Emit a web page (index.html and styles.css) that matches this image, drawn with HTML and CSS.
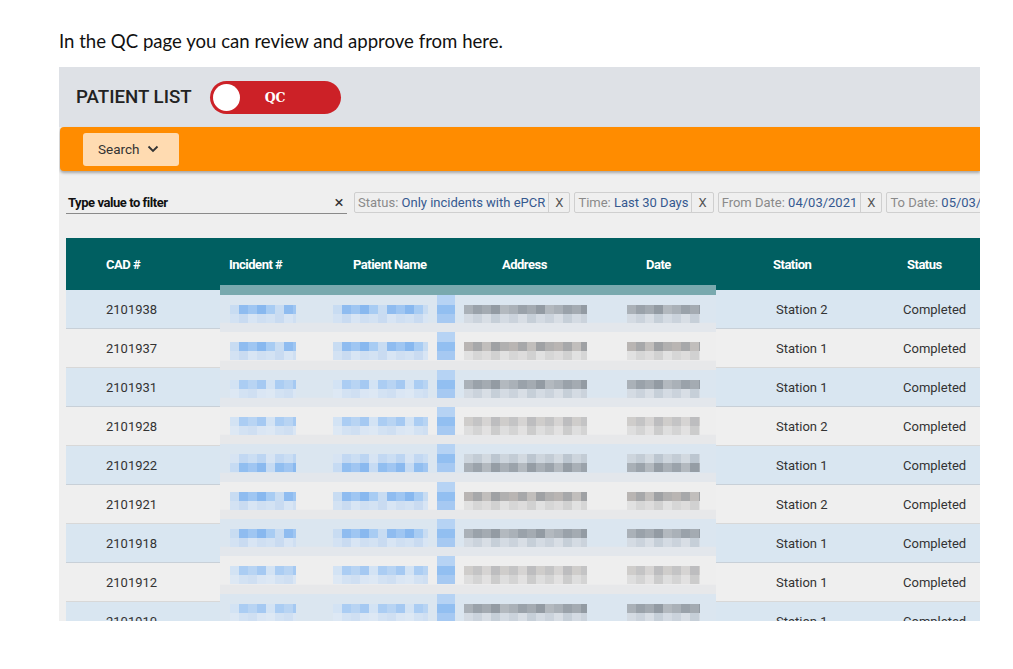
FILE: index.html
```html
<!DOCTYPE html>
<html lang="en">
<head>
  <meta charset="UTF-8">
  <title>QC page</title>
  <link rel="stylesheet" href="styles.css">
</head>
<body>
  <p class="intro">In the QC page you can review and approve from here.</p>

  <div class="shot">
    <div class="topbar">
      <h1>PATIENT LIST</h1>
      <div class="toggle"><span class="knob"></span><span class="toggle-label">QC</span></div>
    </div>

    <div class="orange">
      <button class="search">Search
        <svg width="12" height="8" viewBox="0 0 12 8"><path d="M1.5 1.5 L6 6 L10.5 1.5" fill="none" stroke="#333" stroke-width="1.8"/></svg>
      </button>
    </div>

    <div class="filters">
      <div class="filter-input">
        <span>Type value to filter</span>
        <span class="clear">&times;</span>
      </div>
      <div class="chip"><span class="chip-text">Status: <b>Only incidents with ePCR</b></span><span class="chip-x">X</span></div>
      <div class="chip"><span class="chip-text">Time: <b>Last 30 Days</b></span><span class="chip-x">X</span></div>
      <div class="chip"><span class="chip-text">From Date: <b>04/03/2021</b></span><span class="chip-x">X</span></div>
      <div class="chip"><span class="chip-text">To Date: <b>05/03/2021</b></span><span class="chip-x">X</span></div>
    </div>

    <div class="table">
      <div class="row head">
        <div class="c1">CAD #</div>
        <div>Incident #</div>
        <div>Patient Name</div>
        <div>Address</div>
        <div>Date</div>
        <div class="c6">Station</div>
        <div class="c7">Status</div>
      </div>
      <div class="row blue"><div class="c1">2101938</div><div></div><div></div><div></div><div></div><div class="c6">Station 2</div><div>Completed</div></div>
      <div class="row grey"><div class="c1">2101937</div><div></div><div></div><div></div><div></div><div class="c6">Station 1</div><div>Completed</div></div>
      <div class="row blue"><div class="c1">2101931</div><div></div><div></div><div></div><div></div><div class="c6">Station 1</div><div>Completed</div></div>
      <div class="row grey"><div class="c1">2101928</div><div></div><div></div><div></div><div></div><div class="c6">Station 2</div><div>Completed</div></div>
      <div class="row blue"><div class="c1">2101922</div><div></div><div></div><div></div><div></div><div class="c6">Station 1</div><div>Completed</div></div>
      <div class="row grey"><div class="c1">2101921</div><div></div><div></div><div></div><div></div><div class="c6">Station 2</div><div>Completed</div></div>
      <div class="row blue"><div class="c1">2101918</div><div></div><div></div><div></div><div></div><div class="c6">Station 1</div><div>Completed</div></div>
      <div class="row grey"><div class="c1">2101912</div><div></div><div></div><div></div><div></div><div class="c6">Station 1</div><div>Completed</div></div>
      <div class="row blue"><div class="c1">2101910</div><div></div><div></div><div></div><div></div><div class="c6">Station 1</div><div>Completed</div></div>
    </div>

    <!-- blurred patch pasted over the private columns -->
    <div class="redact">
      <div class="redact-bar"></div>
      <div class="rrow blue"><i class="b inc dk"></i><i class="b pat dk"></i><i class="b strip"></i><i class="b adr gd"></i><i class="b dat gd"></i></div>
      <div class="rrow grey"><i class="b inc dk"></i><i class="b pat dk"></i><i class="b strip"></i><i class="b adr gg"></i><i class="b dat gg"></i></div>
      <div class="rrow blue"><i class="b inc lt"></i><i class="b pat lt"></i><i class="b strip"></i><i class="b adr gd"></i><i class="b dat gd"></i></div>
      <div class="rrow grey"><i class="b inc lt"></i><i class="b pat lt"></i><i class="b strip"></i><i class="b adr gl"></i><i class="b dat gl"></i></div>
      <div class="rrow blue"><i class="b inc up"></i><i class="b pat up"></i><i class="b strip"></i><i class="b adr gu"></i><i class="b dat gu"></i></div>
      <div class="rrow grey"><i class="b inc dk"></i><i class="b pat dk"></i><i class="b strip"></i><i class="b adr gg"></i><i class="b dat gg"></i></div>
      <div class="rrow blue"><i class="b inc dk"></i><i class="b pat dk"></i><i class="b strip"></i><i class="b adr gd"></i><i class="b dat gd"></i></div>
      <div class="rrow grey"><i class="b inc lt"></i><i class="b pat lt"></i><i class="b strip"></i><i class="b adr gl"></i><i class="b dat gl"></i></div>
      <div class="rrow blue"><i class="b inc lt"></i><i class="b pat lt"></i><i class="b strip"></i><i class="b adr gd"></i><i class="b dat gd"></i></div>
    </div>
  </div>
</body>
</html>
```

FILE: styles.css
```css
body {
  margin: 0;
  background: #fff;
  font-family: Roboto, "Liberation Sans", sans-serif;
}
.intro {
  margin: 0;
  padding: 31px 0 0 59px;
  font-family: Lato, "Liberation Sans", sans-serif;
  font-size: 18.6px;
  line-height: 20px;
  color: #111;
}
.shot {
  position: relative;
  width: 921px;
  height: 554px;
  margin: 16px 0 0 59px;
  background: #efefef;
  overflow: hidden;
}
.topbar {
  height: 60px;
  background: #dee1e6;
  display: flex;
  align-items: center;
  padding-left: 17px;
}
.topbar h1 {
  margin: 0;
  font-size: 18.7px;
  font-weight: 500;
  color: #222;
}
.toggle {
  margin-left: 18px;
  width: 131px;
  height: 33px;
  border-radius: 17px;
  background: #cc2127;
  display: flex;
  align-items: center;
  position: relative;
}
.knob {
  position: absolute;
  left: 3px;
  top: 3px;
  width: 27px;
  height: 27px;
  border-radius: 50%;
  background: #fff;
}
.toggle-label {
  margin-left: 55px;
  color: #fff;
  font-family: "DejaVu Serif", serif;
  font-weight: bold;
  font-size: 12.5px;
}
.orange {
  margin-left: 1px;
  height: 44px;
  background: #ff8c00;
  border-radius: 4px 0 0 4px;
  box-shadow: 0 2px 3px rgba(0,0,0,0.3);
  display: flex;
  align-items: center;
  padding-left: 23px;
}
.search {
  width: 96px;
  height: 33px;
  border: none;
  border-radius: 3px;
  background: #ffdbb1;
  font-family: Roboto, sans-serif;
  font-size: 13.5px;
  color: #333;
  display: flex;
  align-items: center;
  padding: 0 0 0 15px;
  gap: 8px;
}
.filters {
  display: flex;
  align-items: center;
  padding: 20px 0 0 7px;
  height: 23px;
}
.filter-input {
  flex-shrink: 0;
  width: 281px;
  height: 22px;
  border-bottom: 1px solid #8a8a8a;
  display: flex;
  align-items: center;
  justify-content: space-between;
  font-size: 13px;
  font-weight: bold;
  letter-spacing: -0.45px;
  color: #111;
  padding-left: 2px;
  box-sizing: border-box;
  margin-right: 7px;
}
.clear {
  font-weight: normal;
  font-size: 17px;
  color: #333;
  margin-right: 4px;
}
.chip {
  display: flex;
  height: 19px;
  border: 1px solid #cfcfcf;
  border-radius: 2px;
  margin-right: 4px;
  font-size: 13px;
  color: #8a8a8a;
  flex-shrink: 0;
  white-space: nowrap;
}
.chip-text {
  padding: 0 3px;
  line-height: 19px;
}
.chip-text b {
  font-weight: normal;
  color: #35598f;
}
.chip-x {
  border-left: 1px solid #cfcfcf;
  padding: 0 6px;
  line-height: 19px;
  color: #555;
}
.table {
  margin: 24px 0 0 7px;
  width: 914px;
}
.row {
  display: grid;
  grid-template-columns: 163px 124px 149px 144px 126px 131px 77px;
  align-items: center;
  height: 39px;
  font-size: 13px;
  color: #333;
  border-bottom: 1px solid #c8d0d8;
  box-sizing: border-box;
  white-space: nowrap;
}
.row .c1 {
  padding-left: 40px;
}
.row .c6 {
  padding-left: 4px;
}
.row.head {
  height: 52px;
  background: #005f61;
  color: #fff;
  font-weight: bold;
  letter-spacing: -0.5px;
  border: none;
}
.row.head .c6 {
  padding-left: 1px;
}
.row.head .c7 {
  padding-left: 4px;
}
.row.blue {
  background: #d9e6f1;
}
.row.grey {
  background: #efefef;
  border-bottom-color: #d8d8d8;
}

/* blurred patch */
.redact {
  position: absolute;
  left: 161px;
  top: 218px;
  width: 496px;
}
.redact-bar {
  height: 10px;
  background: #79a9ae;
}
.rrow {
  position: relative;
  height: 37.33px;
  box-shadow: inset 0 -9.33px 0 #e3e7ec;
}
.rrow.blue {
  background: #dbe6f0;
}
.rrow.grey {
  background: #eeeeee;
  box-shadow: inset 0 -9.33px 0 #e7e8ea;
}
.b {
  position: absolute;
  top: 10px;
  height: 18px;
  background-repeat: repeat-x;
  background-size: 100% 9px;
  background-position: 0 0, 0 9px;
}
.inc { left: 10px; width: 66px; }
.pat { left: 113px; width: 95px; }
.adr { left: 244px; width: 123px; }
.dat { left: 407px; width: 73px; }
.b.strip {
  left: 217px;
  width: 18px;
  top: 0;
  height: 28px;
  background: linear-gradient(180deg, #b6d3f4 0 10px, #92bff1 10px 19px, #a6c9f2 19px 28px);
}
.b.dk {
  background-image:
    repeating-linear-gradient(90deg, #c8dcf2 0 9px, #8fbcf0 9px 18px, #9fc6f2 18px 27px, #88b8ef 27px 36px, #a8ccf3 36px 45px),
    repeating-linear-gradient(90deg, #d3e2f3 0 9px, #c9dbf1 9px 18px, #d8e5f4 18px 27px, #cfdff2 27px 36px);
}
.b.lt {
  background-image:
    repeating-linear-gradient(90deg, #d3e3f4 0 9px, #abcdf3 9px 18px, #b8d4f3 18px 27px, #a5c9f2 27px 36px),
    repeating-linear-gradient(90deg, #dde8f4 0 9px, #d3e2f3 9px 18px, #cfdff2 18px 27px, #dae6f4 27px 36px);
}
.b.up {
  background-image:
    repeating-linear-gradient(90deg, #d7e4f3 0 9px, #c2d8f2 9px 18px, #cbdef3 18px 27px, #bcd5f2 27px 36px),
    repeating-linear-gradient(90deg, #c6dbf3 0 9px, #91bef0 9px 18px, #a0c6f2 18px 27px, #8ab9ef 27px 36px);
}
.b.gd {
  background-image:
    repeating-linear-gradient(90deg, #aab1b8 0 9px, #9aa2aa 9px 18px, #a4abb2 18px 27px, #939ba3 27px 36px, #b3b9bf 36px 45px),
    repeating-linear-gradient(90deg, #d4dbe3 0 9px, #cbd3dc 9px 18px, #d8dee5 18px 27px, #c6cfd8 27px 36px);
}
.b.gu {
  background-image:
    repeating-linear-gradient(90deg, #cdd5dd 0 9px, #c3ccd5 9px 18px, #d2d9e0 18px 27px, #bcc6d0 27px 36px),
    repeating-linear-gradient(90deg, #a9b0b7 0 9px, #9ba3ab 9px 18px, #b3b9bf 18px 27px, #959da5 27px 36px);
}
.b.gg {
  background-image:
    repeating-linear-gradient(90deg, #b9b5b3 0 9px, #a7a8aa 9px 18px, #c1bebc 18px 27px, #9fa1a4 27px 36px, #b1b0b0 36px 45px),
    repeating-linear-gradient(90deg, #e1e1e1 0 9px, #d6d6d6 9px 18px, #dddcdc 18px 27px, #d1d1d1 27px 36px);
}
.b.gl {
  background-image:
    repeating-linear-gradient(90deg, #cfcdcb 0 9px, #c4c4c5 9px 18px, #d6d4d3 18px 27px, #bdbdbf 27px 36px),
    repeating-linear-gradient(90deg, #dedede 0 9px, #d4d4d4 9px 18px, #e2e1e1 18px 27px, #cccccc 27px 36px);
}
```
